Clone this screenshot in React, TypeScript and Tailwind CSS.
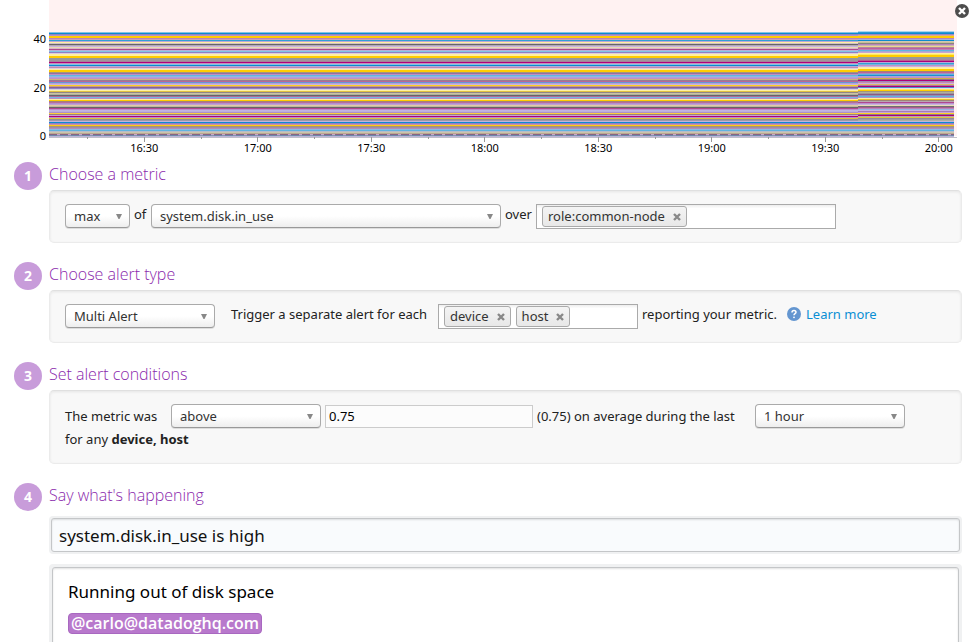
import type { ReactNode } from "react";

const BODY_FONT = "font-['Noto_Sans','Lucida_Grande',sans-serif]";
const TITLE_FONT = "font-['Open_Sans',sans-serif]";

// One colour per pixel row of the stacked series, top to bottom.
const EARLY = [
  "#80c4e6", "#0d8ad0", "#8d88c0", "#b890cc", "#ffcc00", "#ffcc00", "#b884b8", "#d0a0b4", "#33a0d4", "#b8a8d8",
  "#fff0a0", "#d0c0c8", "#666666", "#b4a8b4", "#c8b4e0", "#e8dcb4", "#d8b8c8", "#b0488c", "#b8b0d8", "#80c4e6",
  "#8f80c4", "#dccce0", "#fff0a0", "#fff0a0", "#ffcc00", "#ffcc00", "#999999", "#999999", "#a0949c", "#a88098",
  "#b0007a", "#c890b8", "#80c4e6", "#0d8ad0", "#b8a8d8", "#c088b0", "#dccce0", "#fff0a0", "#ffcc00", "#ffcc00",
  "#a09480", "#98709c", "#c090c0", "#60b4e0", "#88bce4", "#b0a0d8", "#c090c8", "#ccb480", "#987c94", "#b86898",
  "#6898d4", "#b0a0d8", "#c8b4e0", "#ffd020", "#c89c88", "#886490", "#9080c4", "#d8d0d8", "#fff0a0", "#e0c040",
  "#908488", "#ccc4a0", "#b0b0a0", "#666666", "#b06898", "#78b4e0", "#b490c8", "#fff0a0", "#ffcc00", "#a08478",
  "#b86c9c", "#b090cc", "#c4a0d0", "#dccca8", "#c0b8a0", "#666666", "#b0488c", "#b890cc", "#c4b4e0", "#bcb0dc",
  "#b090cc", "#fcd040", "#a08078", "#c8a4d4", "#b0007a", "#b890c8", "#e0c040", "#908c98", "#a098a8", "#c0b4dc",
  "#0d8ad0", "#9080c4", "#c890a8", "#fccc10", "#a89478", "#9c90a4", "#b48cb8", "#88bce4", "#60b4e0", "#b8bcc8",
  "#ccc4ac", "#b8a890", "#886484", "#8894ac",
];
const LATE = [
  "#2c98d4", "#0d8ad0", "#a088c0", "#dca890", "#ffcc00", "#ffcc00", "#b884b8", "#a8b0d8", "#0d8ad0", "#d0c8b0",
  "#c8c094", "#888480", "#b884b8", "#c8b4b0", "#ead88c", "#b088a0", "#c0609c", "#b884b8", "#60b4e0", "#a0a8d8",
  "#c8a4d0", "#fff0a0", "#ffe860", "#ffcc00", "#ffcc00", "#999999", "#999999", "#a888a0", "#b86090", "#b0007a",
  "#b8a8d8", "#33a0d4", "#78b4e0", "#c090c8", "#c8b4e0", "#f8e8b0", "#fff0a0", "#ffcc00", "#ffcc00", "#a08478",
  "#c0609c", "#a090c0", "#60b4e0", "#1c90d0", "#b0a0d8", "#c090c8", "#d0b048", "#907488", "#b0007a", "#9c88b8",
  "#c888b0", "#c8b4e0", "#e0b868", "#a878a0", "#b0007a", "#4c90c8", "#e8e0e8", "#ffe860", "#ffcc00", "#a09480",
  "#b0b0a0", "#a0949c", "#8c5c80", "#908cb8", "#60b4e0", "#b490c8", "#fff0a0", "#e8c030", "#a08478", "#b8a8b0",
  "#b04890", "#b890cc", "#c8b4e0", "#e8dcb4", "#707070", "#a85c90", "#b884b8", "#98b4e0", "#c4b4e0", "#a878b8",
  "#c8a4d4", "#ffd020", "#907888", "#b0007a", "#b8a0b0", "#e0c040", "#908c98", "#a098a8", "#b0b0a0", "#c0b4dc",
  "#0d8ad0", "#9080c4", "#c890a8", "#fccc10", "#a89478", "#9c90a4", "#b48cb8", "#88bce4", "#60b4e0", "#b8bcc8",
  "#ccc4ac", "#b8a890", "#886484", "#8894ac",
];
const HOURS = ["16:30", "17:00", "17:30", "18:00", "18:30", "19:00", "19:30", "20:00"];

function Chart() {
  return (
    <svg
      role="img"
      aria-label="Disk in use over time"
      className={`block h-[162px] w-full overflow-visible text-[11px] ${BODY_FONT}`}
      shapeRendering="crispEdges"
    >
      <rect width="100%" height="136" fill="#fff2f2" />
      {EARLY.map((color, i) => (
        <rect key={i} y={32 + i} width="99.7%" height="1" fill={color} />
      ))}
      {LATE.map((color, i) => (
        <rect key={i} x="89.1%" y={32 + i} width="10.6%" height="1" fill={color} />
      ))}
      <rect y="31" x="89.1%" width="10.6%" height="1" fill="#a8d4ee" />
      <line x1="0" x2="99.7%" y1="134.5" y2="134.5" stroke="#c8a8cc" strokeDasharray="3 8" strokeDashoffset="-8" />
      <line x1="0" x2="99.7%" y1="135.5" y2="135.5" stroke="#6c88a8" strokeDasharray="8 3" />
      <rect y="136" width="99.7%" height="1" fill="#bcb4dc" />
      <rect y="137" width="100%" height="1" fill="#c0c0c8" />
      {[0, 20, 40].map((value) => (
        <text key={value} x="-3" y={140 - value * 2.42} textAnchor="end" fill="#000">
          {value}
        </text>
      ))}
      {HOURS.map((hour, i) => (
        <g key={hour}>
          <rect x={`${10.45 + i * 12.5}%`} y="137" width="1" height="5" fill="#999" />
          <rect x={`${4.2 + i * 12.5}%`} y="137" width="1" height="2" fill="#999" />
          <text x={`${10.5 + i * 12.5}%`} y="152" textAnchor="middle" fill="#000">
            {hour}
          </text>
        </g>
      ))}
    </svg>
  );
}

function Select({ label, options, width }: { label: string; options: string[]; width: string }) {
  return (
    <span className={`relative block shrink-0 ${width}`}>
      <select
        aria-label={label}
        className="block h-6 w-full appearance-none rounded-[4px] border border-[#aaa] border-b-[#999] bg-linear-to-b from-white from-50% to-[#eee] pr-5 pl-2 text-[13px] leading-5 text-[#333] shadow-[0_1px_0_#ddd]"
      >
        {options.map((option) => (
          <option key={option}>{option}</option>
        ))}
      </select>
      <svg viewBox="0 0 6 5" className="pointer-events-none absolute top-[10px] right-2 h-[5px] w-[6px]" fill="#888">
        <path d="M0 0h6L3.5 5h-1z" />
      </svg>
    </span>
  );
}

function TagBox({ label, tags, width }: { label: string; tags: string[]; width: string }) {
  return (
    <div
      className={`flex h-[25px] shrink-0 items-center gap-[5px] border border-[#aaa] bg-white bg-linear-to-b from-[#eee] to-white to-15% pl-[5px] ${width}`}
    >
      {tags.map((tag) => (
        <span
          key={tag}
          className="flex h-[21px] items-center gap-2 rounded-[3px] border border-[#aaa] bg-linear-to-b from-[#f4f4f4] to-[#e8e8e8] px-[5px] text-[13px] leading-[18px] text-[#333]"
        >
          <span className="pb-px">{tag}</span>
          <button type="button" aria-label={`Remove ${tag}`}>
            <svg viewBox="0 0 8 8" className="block size-2" stroke="#888" strokeWidth="2.4">
              <path d="M1 1l6 6M7 1L1 7" />
            </svg>
          </button>
        </span>
      ))}
      <input aria-label={label} className="h-full min-w-0 flex-1 bg-transparent outline-none" />
    </div>
  );
}

function Step({ number, title, children }: { number: number; title: string; children: ReactNode }) {
  return (
    <section className="flex gap-[7px]">
      <span
        className={`flex size-7 shrink-0 items-center justify-center rounded-full bg-[#c89cda] text-[14px] font-bold text-white ${TITLE_FONT}`}
      >
        {number}
      </span>
      <div className="min-w-0 flex-1">
        <h2 className={`mb-1 text-[16px] leading-6 font-light text-[#8a28ac] ${TITLE_FONT}`}>{title}</h2>
        {children}
      </div>
    </section>
  );
}

const PANEL =
  "rounded-[5px] border border-[#ebebeb] border-t-[#e0e0e0] bg-[#f8f8f8] px-[15px] py-[13px] shadow-[inset_0_1px_3px_rgba(0,0,0,0.08)]";

export default function App() {
  return (
    <main className={`relative h-screen overflow-hidden bg-white text-[13px] leading-5 text-[#222] ${BODY_FONT}`}>
      <div className="pr-[15px] pl-[49px]">
        <Chart />
      </div>
      <button type="button" aria-label="Close" className="absolute top-1 right-[3px]">
        <svg viewBox="0 0 14 14" className="block size-[14px]">
          <circle cx="7" cy="7" r="7" fill="#4d4d4d" />
          <path d="M4 4l6 6M10 4l-6 6" stroke="#fff" strokeWidth="2.4" />
        </svg>
      </button>

      <form className="flex flex-col gap-[19px] pr-[10px] pl-[14px]">
        <Step number={1} title="Choose a metric">
          <div className={`flex items-start gap-1 ${PANEL}`}>
            <Select label="Aggregation" options={["max", "min", "avg"]} width="w-[65px]" />
            <span className="min-w-[13px]">of</span>
            <Select label="Metric" options={["system.disk.in_use"]} width="w-[350px]" />
            <span className="min-w-[27px]">over</span>
            <TagBox label="Scope" tags={["role:common-node"]} width="w-[300px]" />
          </div>
        </Step>

        <Step number={2} title="Choose alert type">
          <div className={`flex items-start gap-1 ${PANEL}`}>
            <Select label="Alert type" options={["Multi Alert", "Simple Alert"]} width="w-[150px]" />
            <span className="min-w-[215px] pl-3">Trigger a separate alert for each</span>
            <TagBox label="Group by" tags={["device", "host"]} width="w-[200px]" />
            <span className="min-w-[141px]">reporting your metric.</span>
            <a href="#alert-types" className="flex items-center gap-[5px] text-[#0a8fd4]">
              <svg viewBox="0 0 14 14" className="size-[14px]">
                <circle cx="7" cy="7" r="7" fill="#6496d0" />
                <path
                  d="M5 5.4C5 4.2 5.8 3.4 7 3.4s2 .8 2 1.8c0 1.400-2 1.500-2 3"
                  fill="none"
                  stroke="#fff"
                  strokeWidth="1.500"
                />
                <circle cx="7" cy="10.300" r="0.9" fill="#fff" />
              </svg>
              Learn more
            </a>
          </div>
        </Step>

        <Step number={3} title="Set alert conditions">
          <div className={PANEL}>
            <div className="flex items-center gap-1">
              <span className="min-w-[102px]">The metric was</span>
              <Select label="Comparison" options={["above", "below"]} width="w-[150px]" />
              <input
                aria-label="Threshold"
                defaultValue="0.75"
                className="h-[23px] w-[208px] border border-[#ccc] bg-[#fcfcfc] px-[3px] text-black"
              />
              <span className="min-w-[214px]">(0.75) on average during the last</span>
              <Select label="Time window" options={["1 hour", "2 hours"]} width="w-[150px]" />
            </div>
            <p className="leading-[22px]">
              for any <b>device, host</b>
            </p>
          </div>
        </Step>

        <Step number={4} title="Say what's happening">
          <div className="mt-[9px] flex flex-col gap-[10px]">
            <div className="rounded-[4px] bg-[#f0f1f2] p-[2px]">
              <input
                aria-label="Alert title"
                defaultValue="system.disk.in_use is high"
                className="block h-[34px] w-full rounded-[3px] border border-[#c4c6c8] bg-[#f9fbfd] px-[7px] text-[17px] text-[#111] shadow-[inset_0_1px_2px_rgba(0,0,0,0.12)]"
              />
            </div>
            <div className="rounded-[4px] bg-[#f0f1f2] p-[3px]">
              <div className="h-[160px] rounded-[3px] border border-[#c4c6c8] bg-white px-[15px] py-2 shadow-[inset_0_1px_2px_rgba(0,0,0,0.12)]">
                <textarea
                  aria-label="Alert message"
                  rows={1}
                  defaultValue="Running out of disk space"
                  className="block h-8 w-full resize-none text-[17px] leading-8 text-black outline-none"
                />
                <a
                  href="mailto:carlo@datadoghq.com"
                  className={`mt-[5px] inline-block rounded-[4px] border border-[#a868c0] bg-[#b878cc] px-[2px] text-[16px] leading-[19px] font-semibold text-white ${TITLE_FONT}`}
                >
                  @carlo@datadoghq.com
                </a>
              </div>
            </div>
          </div>
        </Step>
      </form>
    </main>
  );
}
